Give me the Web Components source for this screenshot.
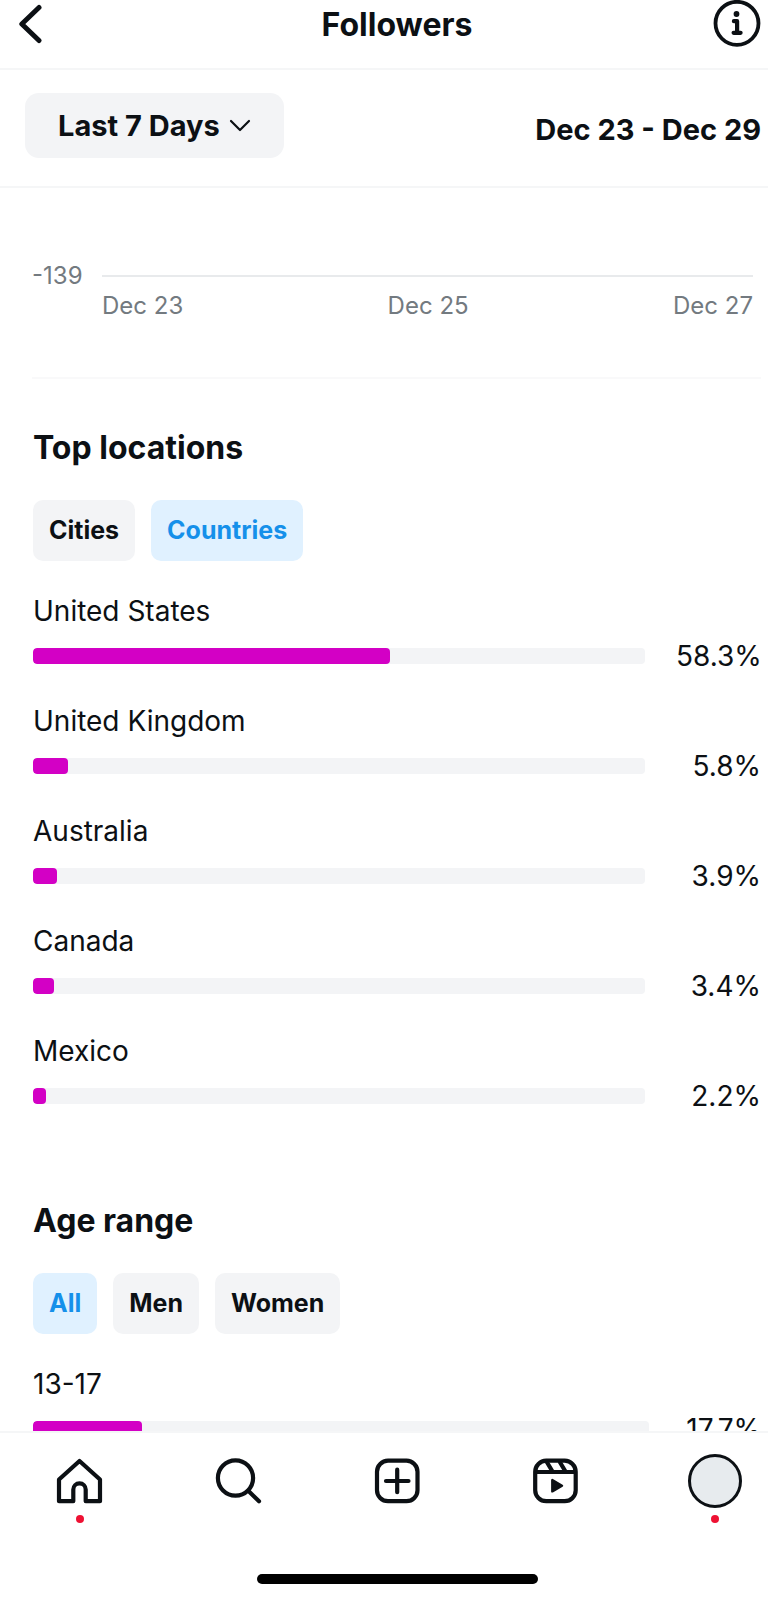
<!DOCTYPE html>
<html lang="en">
<head>
<meta charset="utf-8">
<meta name="viewport" content="width=device-width, initial-scale=1">
<title>Followers</title>
<style>
  html, body { margin: 0; height: 100%; }
  body {
    --ink: #0c1014;
    --muted: #737a80;
    --fill: #f3f4f6;
    --line: #f5f6f7;
    --accent: #d300c5;
    --blue: #1590ea;
    --blue-fill: #e0f1ff;
    background: #fff;
    color: var(--ink);
    font-family: Inter, "Liberation Sans", sans-serif;
  }
</style>
</head>
<body>
<followers-screen></followers-screen>

<template id="screen">
  <style>
    :host { display: flex; flex-direction: column; height: 100vh; overflow: hidden; }
    main { flex: 1; min-height: 0; overflow: hidden; }
    insight-list { --value-width: 85px; }
    insight-list.ages { --value-width: 81px; }
  </style>
  <top-bar>Followers</top-bar>
  <filter-bar period="Last 7 Days">Dec 23 - Dec 29</filter-bar>
  <main>
    <chart-axis floor="-139" ticks="Dec 23,Dec 25,Dec 27"></chart-axis>
    <insight-section heading="Top locations">
      <chip-button slot="chips">Cities</chip-button>
      <chip-button slot="chips" selected>Countries</chip-button>
      <insight-list>
        <insight-row value="58.3">United States</insight-row>
        <insight-row value="5.8">United Kingdom</insight-row>
        <insight-row value="3.9">Australia</insight-row>
        <insight-row value="3.4">Canada</insight-row>
        <insight-row value="2.2">Mexico</insight-row>
      </insight-list>
    </insight-section>
    <insight-section heading="Age range">
      <chip-button slot="chips" selected>All</chip-button>
      <chip-button slot="chips">Men</chip-button>
      <chip-button slot="chips">Women</chip-button>
      <insight-list class="ages">
        <insight-row value="17.7">13-17</insight-row>
      </insight-list>
    </insight-section>
  </main>
  <tab-bar></tab-bar>
</template>

<template id="top-bar">
  <style>
    :host { display: block; border-bottom: 2px solid var(--line); }
    header { display: grid; grid-template-columns: 62px 1fr 48px; align-items: start; height: 48px; padding: 0 7px 20px 19px; }
    h1 { margin: 0; text-align: center; font-size: 32px; line-height: 50px; font-weight: 700; }
    button { display: block; padding: 0; border: 0; background: none; color: inherit; width: 48px; height: 48px; }
    svg { display: block; }
  </style>
  <header>
    <button aria-label="Back">
      <svg width="24" height="48" viewBox="0 0 24 48" fill="none" stroke="currentColor" stroke-width="5" stroke-linecap="round" stroke-linejoin="round"><path d="M20 7.500 2.800 24 20 40.500"/></svg>
    </button>
    <h1><slot></slot></h1>
    <button aria-label="About this data">
      <svg width="48" height="48" viewBox="0 0 48 48" fill="none" stroke="currentColor"><circle cx="24" cy="23.300" r="21.500" stroke-width="3.800"/><circle cx="23.500" cy="14" r="2.900" fill="currentColor" stroke="none"/><path d="M20.900 21.200h3.200v11.500M20.600 32.800h7" stroke-width="4.200" stroke-linecap="round" stroke-linejoin="round"/></svg>
    </button>
  </header>
</template>

<template id="filter-bar">
  <style>
    :host { display: flex; align-items: center; justify-content: space-between; padding: 23px 7px 28px 25px; border-bottom: 2px solid var(--line); font-size: 29px; font-weight: 700; }
    button { display: flex; align-items: center; gap: 9px; padding: 15px 33px 14px; border: 0; border-radius: 14px; background: var(--fill); color: inherit; font: inherit; line-height: 36px; }
    time { line-height: 36px; padding-top: 8px; }
  </style>
  <button aria-haspopup="listbox"><span id="period"></span>
    <svg width="22" height="14" viewBox="0 0 22 14" fill="none" stroke="currentColor" stroke-width="2.200" stroke-linecap="round" stroke-linejoin="round"><path d="m2 2 9 9 9-9"/></svg>
  </button>
  <time><slot></slot></time>
</template>

<template id="chart-axis">
  <style>
    :host { display: grid; grid-template-columns: 54px 1fr; column-gap: 16px; margin: 0 7px 0 32px; padding: 73px 8px 56px 0; border-bottom: 2px solid #f9f9fa; color: var(--muted); font-size: 24px; line-height: 30px; }
    .rule { align-self: center; height: 2px; background: #e8eaec; }
    .ticks { grid-column: 2; display: flex; justify-content: space-between; }
  </style>
  <span id="floor"></span><div class="rule"></div>
  <div class="ticks"></div>
</template>

<template id="insight-section">
  <style>
    :host { display: block; padding: 49px 7px 38px 33px; }
    h2 { margin: 0 0 32px; font-size: 32px; line-height: 40px; font-weight: 700; }
    .chips { display: flex; gap: 16px; margin-bottom: 32px; }
  </style>
  <h2></h2>
  <div class="chips"><slot name="chips"></slot></div>
  <slot></slot>
</template>

<template id="chip-button">
  <style>
    :host { display: block; }
    button { display: block; padding: 16px; border: 0; border-radius: 10px; background: var(--fill); color: inherit; font: 700 25px/29px Inter, "Liberation Sans", sans-serif; }
    :host([selected]) button { background: var(--blue-fill); color: var(--blue); }
  </style>
  <button><slot></slot></button>
</template>

<template id="insight-list">
  <style>
    :host { display: flex; flex-direction: column; gap: 29px; }
  </style>
  <slot></slot>
</template>

<template id="insight-row">
  <style>
    :host { display: grid; grid-template-columns: 1fr var(--value-width); gap: 9px 31px; align-items: center; font-size: 28px; line-height: 36px; }
    .label { grid-column: 1 / -1; }
    .track { height: 16px; border-radius: 4px; background: var(--fill); overflow: hidden; }
    .bar { height: 100%; border-radius: 4px; background: var(--accent); }
    .value { text-align: right; white-space: nowrap; }
  </style>
  <span class="label"><slot></slot></span>
  <div class="track" role="meter" aria-valuemin="0" aria-valuemax="100"><div class="bar"></div></div>
  <span class="value"></span>
</template>

<template id="tab-bar">
  <style>
    :host { display: block; flex: none; border-top: 2px solid var(--line); background: #fff; }
    nav { display: flex; justify-content: space-between; padding: 21px 26px 0 53px; }
    a { display: flex; flex-direction: column; align-items: center; gap: 7px; width: 54px; color: inherit; }
    svg { display: block; }
    .dot { width: 8px; height: 8px; border-radius: 50%; background: #ee1133; }
    .avatar { box-sizing: border-box; width: 54px; height: 54px; border: 3px solid var(--ink); border-radius: 50%; background: #e7ebee; }
    .handle { width: 38%; height: 10px; margin: 51px auto 16px; border-radius: 5px; background: #000; }
    .foot { padding-left: 27px; }
  </style>
  <nav aria-label="Main">
    <a href="#home" aria-label="Home">
      <svg width="54" height="54" viewBox="0 0 54 54" fill="none" stroke="currentColor" stroke-width="4.200" stroke-linejoin="round"><path d="M6 25.500 26.500 7l20.500 18.500V47.200H32.700V35.500a6.200 6.200 0 0 0-12.400 0V47.200H6z"/></svg>
      <span class="dot"></span>
    </a>
    <a href="#search" aria-label="Search">
      <svg width="54" height="54" viewBox="0 0 54 54" fill="none" stroke="currentColor" stroke-width="4.200" stroke-linecap="round"><circle cx="23.500" cy="24" r="17.600"/><path d="M36.500 37 47 47.300"/></svg>
    </a>
    <a href="#create" aria-label="Create">
      <svg width="54" height="54" viewBox="0 0 54 54" fill="none" stroke="currentColor" stroke-width="4.200" stroke-linecap="round"><rect x="6" y="6.700" width="40.500" height="40.500" rx="11"/><path d="M26.200 15.700v22.500M15 27h22.500"/></svg>
    </a>
    <a href="#reels" aria-label="Reels">
      <svg width="54" height="54" viewBox="0 0 54 54" fill="none" stroke="currentColor" stroke-width="4.200"><rect x="6.200" y="6.700" width="40.500" height="40.500" rx="11"/><path d="M6.200 18H46.700M17.500 7.500l6 10M30.500 7.500l6 10"/><path d="M23.300 26v11.400L33 31.700z" fill="currentColor" stroke-width="2.400" stroke-linejoin="round"/></svg>
    </a>
    <a href="#profile" aria-label="Profile">
      <span class="avatar"></span>
      <span class="dot"></span>
    </a>
  </nav>
  <div class="foot"><div class="handle"></div></div>
</template>

<script>
  class TemplateElement extends HTMLElement {
    connectedCallback() {
      if (this.shadowRoot) return;
      const root = this.attachShadow({ mode: "open" });
      root.append(document.getElementById(this.constructor.template).content.cloneNode(true));
      this.fill(root);
    }
    fill() {}
  }
  const define = (name, template, fill) => {
    customElements.define(name, class extends TemplateElement {
      static template = template;
      fill(root) { if (fill) fill(this, root); }
    });
  };
  define("top-bar", "top-bar");
  define("filter-bar", "filter-bar", (el, root) => {
    root.getElementById("period").textContent = el.getAttribute("period");
  });
  define("chart-axis", "chart-axis", (el, root) => {
    root.getElementById("floor").textContent = el.getAttribute("floor");
    for (const tick of el.getAttribute("ticks").split(",")) {
      const span = document.createElement("span");
      span.textContent = tick;
      root.querySelector(".ticks").append(span);
    }
  });
  define("insight-section", "insight-section", (el, root) => {
    root.querySelector("h2").textContent = el.getAttribute("heading");
  });
  define("chip-button", "chip-button", (el, root) => {
    root.querySelector("button").setAttribute("aria-pressed", el.hasAttribute("selected"));
  });
  define("insight-list", "insight-list");
  define("insight-row", "insight-row", (el, root) => {
    const value = el.getAttribute("value");
    const track = root.querySelector(".track");
    track.setAttribute("aria-valuenow", value);
    track.setAttribute("aria-label", el.textContent);
    root.querySelector(".bar").style.width = value + "%";
    root.querySelector(".value").textContent = value + "%";
  });
  define("tab-bar", "tab-bar");
  define("followers-screen", "screen");
</script>
</body>
</html>
